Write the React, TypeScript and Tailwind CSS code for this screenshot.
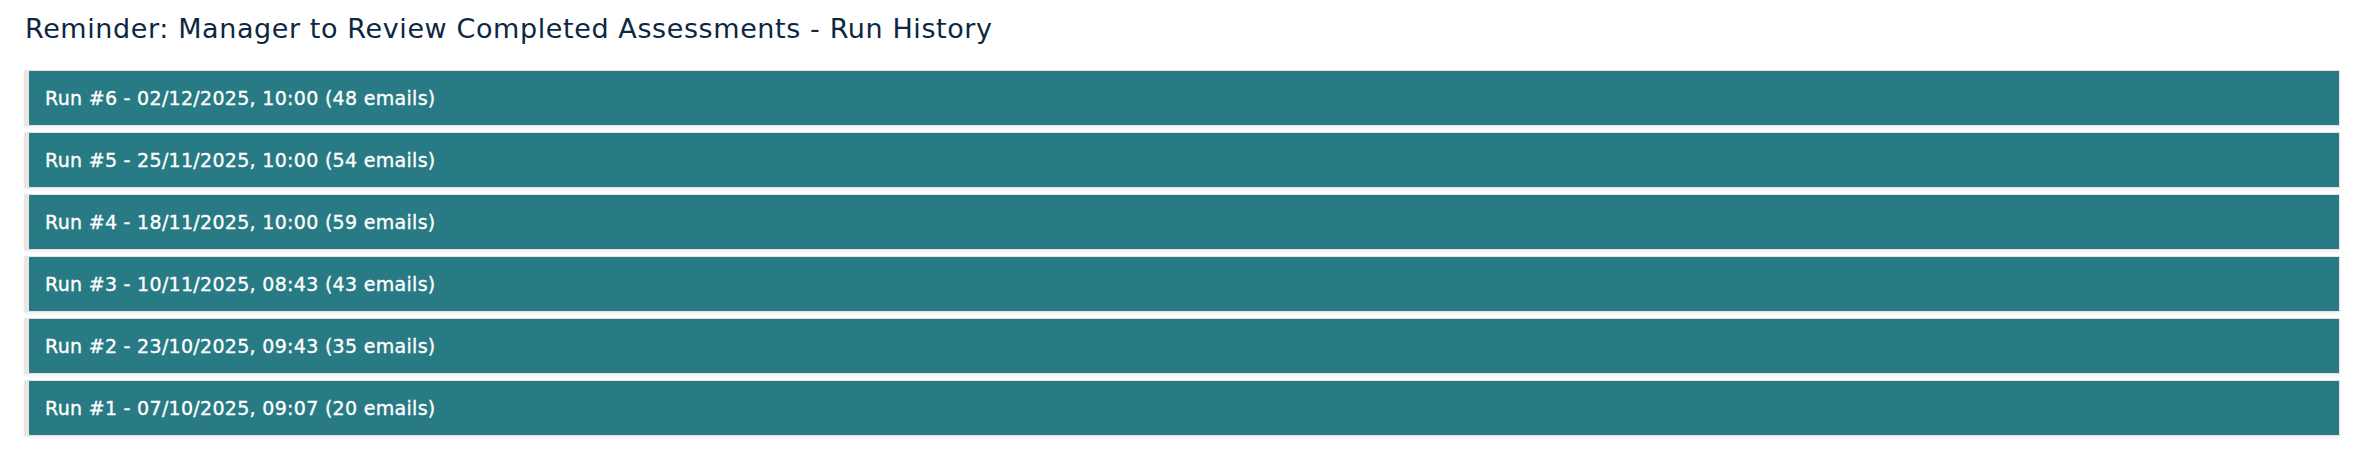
import React from "react";

const runs = [
  "Run #6 - 02/12/2025, 10:00 (48 emails)",
  "Run #5 - 25/11/2025, 10:00 (54 emails)",
  "Run #4 - 18/11/2025, 10:00 (59 emails)",
  "Run #3 - 10/11/2025, 08:43 (43 emails)",
  "Run #2 - 23/10/2025, 09:43 (35 emails)",
  "Run #1 - 07/10/2025, 09:07 (20 emails)",
];

export default function App() {
  return (
    <div className="min-h-screen bg-white pl-[24px] pr-[16px] pt-[13px]" style={{ fontFamily: '"DejaVu Sans", "Open Sans", sans-serif' }}>
      <h1 className="ml-[1px] text-[27px] leading-[32px] tracking-[0.6px] text-[#0d2742] font-normal">
        Reminder: Manager to Review Completed Assessments - Run History
      </h1>
      <div className="mt-[25px] flex flex-col gap-[6px]">
        {runs.map((r) => (
          <div
            key={r}
            className="h-[56px] border-y border-r border-l-[5px] border-[#e6e4e1] border-l-[#ebe8e4] bg-[#287a84] shadow-[0_2px_3px_rgba(0,0,0,0.06)] flex items-center pl-[16px]"
          >
            <span className="text-white text-[19px] tracking-[0.3px] [-webkit-text-stroke:0.35px_white]">{r}</span>
          </div>
        ))}
      </div>
    </div>
  );
}
